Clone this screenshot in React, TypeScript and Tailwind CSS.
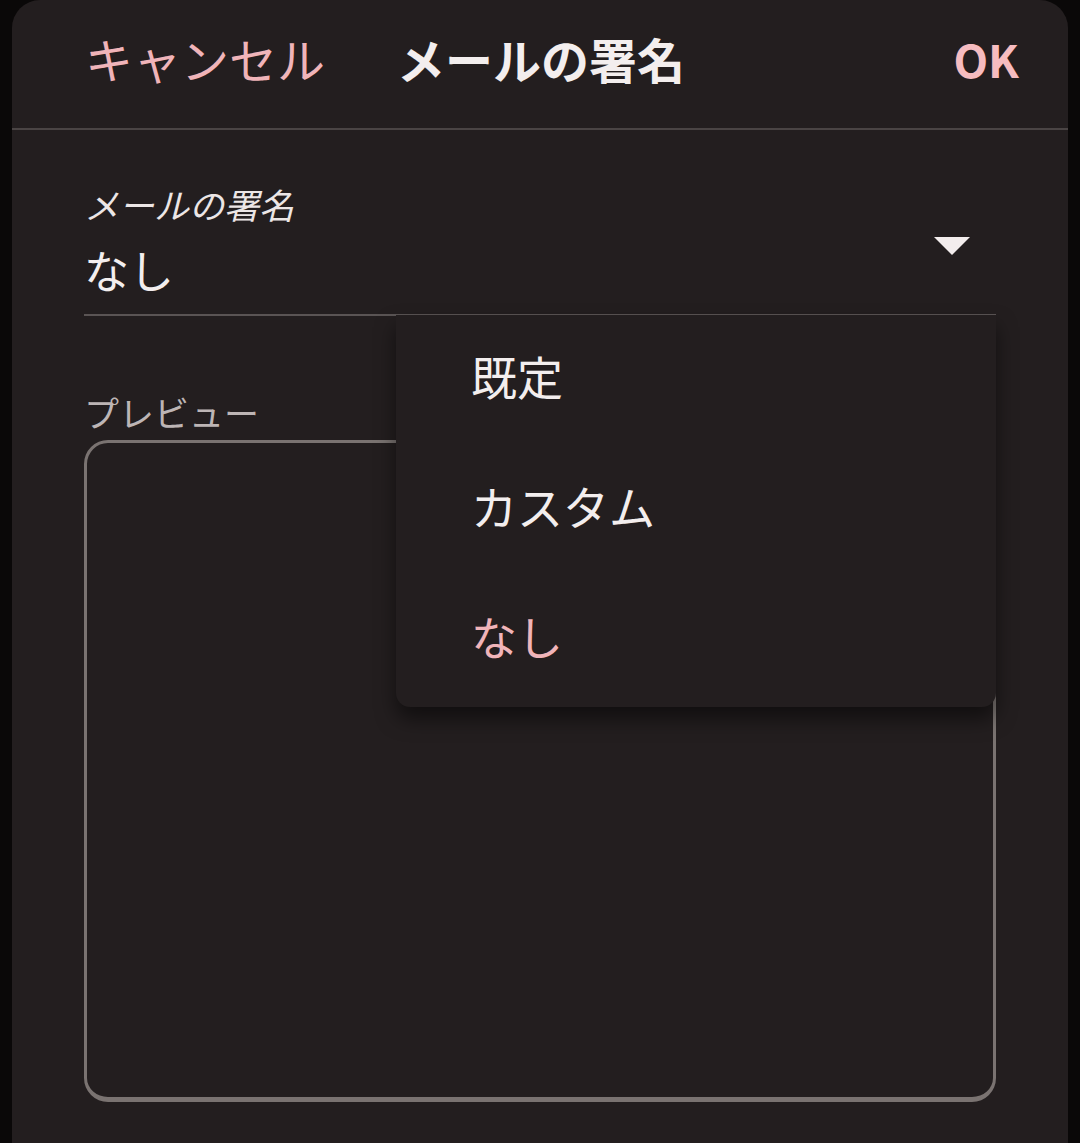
import React from 'react';

const jp = { fontFamily: '"Noto Sans CJK JP", "Noto Sans", sans-serif' };

const options = ['既定', 'カスタム', 'なし'];

export default function App() {
  const selected = 'なし';

  return (
    <div className="min-h-[1143px] w-[1080px] bg-[#0a0808] px-[12px]" style={jp}>
      <div className="relative min-h-[1143px] rounded-t-[28px] bg-[#231e1f]">
        {/* header */}
        <div className="flex h-[130px] items-center border-b-2 border-[#4a4444] pb-[12px] pl-[73px] pr-[49px]">
          <button className="text-[48px] leading-none text-[#f0b4b9]">キャンセル</button>
          <div className="ml-[72px] text-[48px] font-bold leading-none text-[#f3eeee]">メールの署名</div>
          <button className="ml-auto text-[45px] font-bold leading-none text-[#f6bcc0]">OK</button>
        </div>

        <div className="px-[72px]">
          {/* select field */}
          <div className="relative pt-[54px]">
            <div className="text-[35px] italic leading-[40px] text-[#ece6e6]">メールの署名</div>
            <div className="flex items-center border-b-2 border-[#5a5454] pb-[16px] pt-[18px]">
              <span className="text-[45px] leading-[56px] text-[#f3eeee]">{selected}</span>
              <svg className="ml-auto mr-[26px] -mt-[48px]" width="36" height="19" viewBox="0 0 36 19">
                <path d="M0 0 L36 0 L18 18 Z" fill="#f3eded" />
              </svg>
            </div>
          </div>

          {/* preview */}
          <div className="pt-[76px] text-[35px] leading-[40px] text-[#bdb5b5]">プレビュー</div>
          <div className="mt-[8px] h-[662px] rounded-[24px] border-[3px] border-b-[5px] border-[#7a7371]" />
        </div>

        {/* dropdown menu */}
        <div className="absolute left-[384px] top-[315px] w-[600px] rounded-b-[14px] bg-[#231e1f] pb-[2px] shadow-[0_12px_20px_rgba(0,0,0,0.5)]">
          {options.map((o) => (
            <div
              key={o}
              className={
                'flex h-[130px] items-center pb-[10px] pl-[75px] text-[46px] ' +
                (o === selected ? 'text-[#f0b4b9]' : 'text-[#f3eeee]')
              }
            >
              {o}
            </div>
          ))}
        </div>
      </div>
    </div>
  );
}
